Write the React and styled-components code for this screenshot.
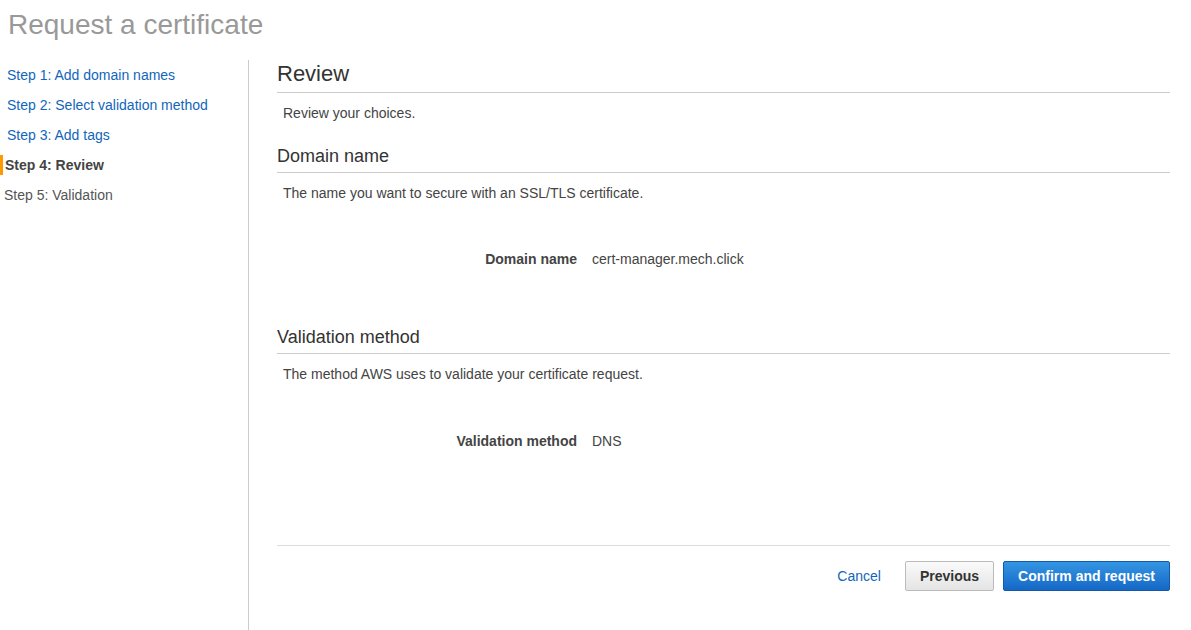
import React from 'react';
import styled, {createGlobalStyle, css} from 'styled-components';

const GlobalStyle = createGlobalStyle`
    html, body {
        margin: 0;
        padding: 0;
        background: #fff;
        font-family: "Liberation Sans", Arial, sans-serif;
        color: #444;
    }
`;

const Page = styled.div`
    width: 1191px;
    height: 630px;
    overflow: hidden;
`;

const Title = styled.h1`
    margin: 11px 0 0 8px;
    font-size: 28px;
    line-height: 28px;
    font-weight: normal;
    color: #999;
    height: 49px;
`;

const Layout = styled.div`
    display: flex;
    align-items: stretch;
    height: 570px;
`;

const Sidebar = styled.nav`
    width: 248px;
    border-right: 1px solid #ccc;
    padding-top: 5px;
    display: flex;
    flex-direction: column;
    gap: 10px;
`;

const StepItem = styled.div`
    font-size: 14px;
    line-height: 20px;
    padding-left: 7px;
    color: #1166bb;
    cursor: pointer;
    ${p => p.active && css`
        border-left: 3px solid #f90;
        padding-left: 2px;
        font-weight: bold;
        color: #444;
        cursor: default;
    `}
    ${p => p.disabled && css`
        padding-left: 4px;
        color: #555;
        cursor: default;
    `}
`;

const Main = styled.main`
    flex: 1;
    margin: 0 21px 0 28px;
    display: flex;
    flex-direction: column;
`;

const PageHeading = styled.h2`
    margin: 0;
    padding-top: 1px;
    font-size: 22px;
    line-height: 26px;
    font-weight: normal;
    color: #333;
    padding-bottom: 5px;
    border-bottom: 1px solid #ccc;
`;

const SectionHeading = styled.h3`
    margin: ${p => p.top}px 0 0;
    font-size: 18px;
    line-height: 22px;
    font-weight: normal;
    color: #333;
    padding-bottom: 5px;
    border-bottom: 1px solid #ccc;
`;

const Description = styled.p`
    margin: 10px 0 0;
    padding-left: 6px;
    font-size: 14px;
    line-height: 20px;
    color: #444;
`;

const DetailRow = styled.div`
    display: grid;
    grid-template-columns: 300px 1fr;
    column-gap: 15px;
    margin-top: ${p => p.top}px;
    font-size: 14px;
    line-height: 20px;
`;

const DetailLabel = styled.div`
    text-align: right;
    font-weight: bold;
    color: #444;
`;

const DetailValue = styled.div`
    color: #444;
`;

const Footer = styled.div`
    margin-top: 94px;
    border-top: 1px solid #ddd;
    padding-top: 15px;
    display: flex;
    justify-content: flex-end;
    align-items: center;
`;

const CancelLink = styled.a`
    font-size: 14px;
    color: #1166bb;
    cursor: pointer;
    margin-right: 24px;
`;

const Button = styled.button`
    height: 30px;
    padding: 0 14px;
    font-family: "Liberation Sans", Arial, sans-serif;
    font-size: 14px;
    font-weight: bold;
    border-radius: 2px;
    cursor: pointer;
    border: 1px solid #bbb;
    color: #333;
    background: linear-gradient(#fafafa, #e4e4e4);
    ${p => p.primary && css`
        margin-left: 9px;
        border-color: #1559a8;
        color: #fff;
        background: linear-gradient(#3495e3, #1568c6);
    `}
`;

const steps = [
    {label: 'Step 1: Add domain names'},
    {label: 'Step 2: Select validation method'},
    {label: 'Step 3: Add tags'},
    {label: 'Step 4: Review', active: true},
    {label: 'Step 5: Validation', disabled: true},
];

export default function App() {
    return (
        <Page>
            <GlobalStyle />
            <Title>Request a certificate</Title>
            <Layout>
                <Sidebar>
                    {steps.map(s => (
                        <StepItem key={s.label} active={s.active} disabled={s.disabled}>{s.label}</StepItem>
                    ))}
                </Sidebar>
                <Main>
                    <PageHeading>Review</PageHeading>
                    <Description>Review your choices.</Description>

                    <SectionHeading top={22}>Domain name</SectionHeading>
                    <Description>The name you want to secure with an SSL/TLS certificate.</Description>
                    <DetailRow top={46}>
                        <DetailLabel>Domain name</DetailLabel>
                        <DetailValue>cert-manager.mech.click</DetailValue>
                    </DetailRow>

                    <SectionHeading top={57}>Validation method</SectionHeading>
                    <Description>The method AWS uses to validate your certificate request.</Description>
                    <DetailRow top={47}>
                        <DetailLabel>Validation method</DetailLabel>
                        <DetailValue>DNS</DetailValue>
                    </DetailRow>

                    <Footer>
                        <CancelLink>Cancel</CancelLink>
                        <Button>Previous</Button>
                        <Button primary>Confirm and request</Button>
                    </Footer>
                </Main>
            </Layout>
        </Page>
    );
}
